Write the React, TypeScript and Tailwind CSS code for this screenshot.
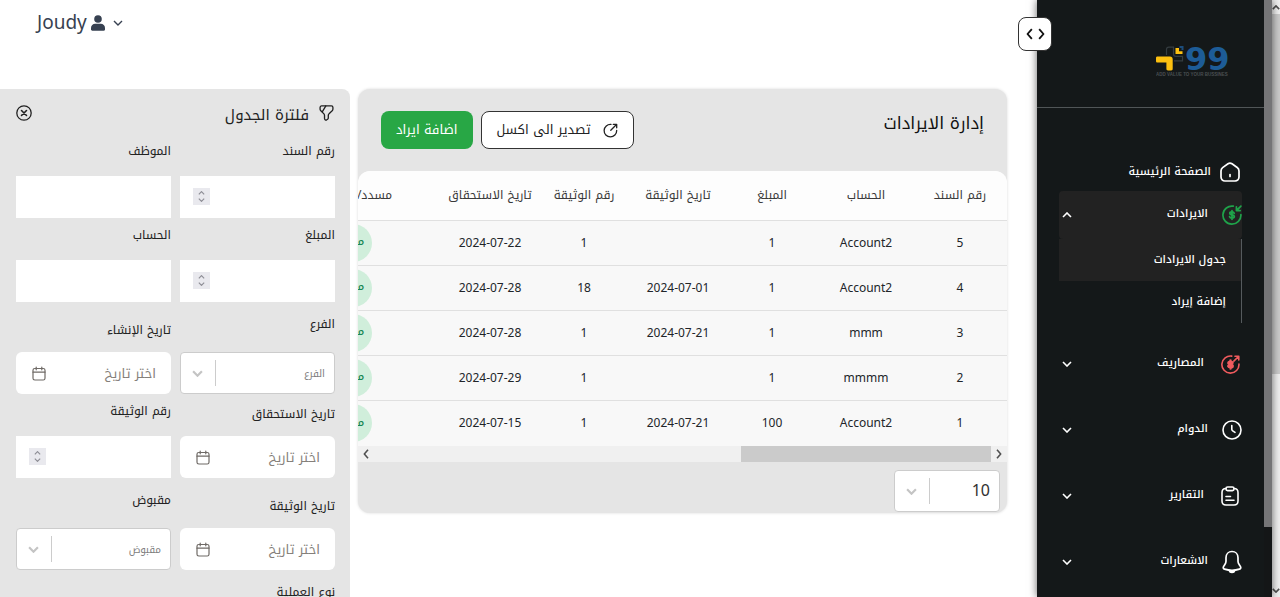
import type { ReactNode } from 'react';

type IconProps = { className?: string };

const line = {
  fill: 'none',
  stroke: 'currentColor',
  strokeLinecap: 'round' as const,
  strokeLinejoin: 'round' as const,
};

function HomeIcon({ className }: IconProps) {
  return (
    <svg viewBox="0 0 20 20" className={className} {...line} strokeWidth="1.7">
      <path d="M8 1.7 2.6 5.6C1.6 6.4 1 7.6 1 8.9v6.2A3.9 3.9 0 0 0 4.9 19h10.2a3.9 3.9 0 0 0 3.9-3.9V8.9c0-1.4-.7-2.6-1.8-3.4L12 1.8a3.6 3.6 0 0 0-4-.1Z" />
      <path d="M10 12.5v2" />
    </svg>
  );
}

function CoinIcon({ className, incoming }: IconProps & { incoming: boolean }) {
  return (
    <svg viewBox="0 0 20 20" className={className} {...line} strokeWidth="1.7">
      <path d="M11.3 1.2A9 9 0 1 0 18.9 9.6" />
      <path d={incoming ? 'M18.9 1.1 14.4 5.6M14.4 1.8V5.6h3.8' : 'M13.5 6.5 18.7 1.3M14.7 1.3h4v4'} />
      <path
        d="M12.2 8.2c-.3-.8-1.1-1.2-2.2-1.2-1.3 0-2.2.5-2.2 1.5 0 2.2 4.5.8 4.5 3 0 1-1 1.5-2.3 1.5-1.2 0-2.1-.4-2.4-1.3M10 5.7v8.6"
        strokeWidth={incoming ? 1.8 : 2.6}
      />
    </svg>
  );
}

function ClockIcon({ className }: IconProps) {
  return (
    <svg viewBox="0 0 20 20" className={className} {...line} strokeWidth="1.6">
      <circle cx="10" cy="10" r="9" />
      <path d="M9.8 5.5v3.7c0 .7.3 1.2.9 1.6l2.3 1.5" />
    </svg>
  );
}

function ClipboardIcon({ className }: IconProps) {
  return (
    <svg viewBox="0 0 20 20" className={className} {...line} strokeWidth="1.6">
      <path d="M6 2.5c-2.5.1-4 1.3-4 4V15c0 2.7 1.4 4 4 4h8c2.6 0 4-1.3 4-4V6.5c0-2.7-1.5-3.9-4-4" />
      <rect x="6" y="1" width="8" height="3.6" rx="1.6" />
      <path d="M6 10.5h4.5M6 14.3h8" />
    </svg>
  );
}

function BellIcon({ className }: IconProps) {
  return (
    <svg viewBox="0 0 20 24" className={className} {...line} strokeWidth="1.7">
      <path d="M10 1.5c-3.5 0-6 2.6-6 6.2v3.5c0 1.2-.5 2.3-1.3 3.5l-1.2 1.9c-.6 1.1-.2 2.2 1 2.5 4.9 1.5 10.1 1.5 15 0 1.2-.3 1.6-1.4 1-2.5l-1.2-1.9C16.5 13.5 16 12.4 16 11.2V7.7c0-3.6-2.5-6.2-6-6.2Z" />
      <path d="M7.2 20.5c.4 1.3 1.5 2 2.8 2s2.4-.7 2.8-2" fill="currentColor" />
    </svg>
  );
}

function Chevron({ className, up, weight = 2 }: IconProps & { up?: boolean; weight?: number }) {
  return (
    <svg viewBox="0 0 10 6" className={className} {...line} strokeWidth={weight} strokeLinecap="butt" strokeLinejoin="miter">
      <path d={up ? 'M1 5l4-4 4 4' : 'M1 1l4 4 4-4'} />
    </svg>
  );
}

function SideArrow({ className, left }: IconProps & { left?: boolean }) {
  return (
    <svg viewBox="0 0 6 10" className={className} {...line} strokeWidth="1.6" strokeLinecap="butt">
      <path d={left ? 'M5 .8 1.3 5 5 9.2' : 'M1 .8 4.7 5 1 9.2'} />
    </svg>
  );
}

function FunnelIcon({ className }: IconProps) {
  return (
    <svg viewBox="0 0 16 18" className={className} {...line} strokeWidth="1.4">
      <path d="M2.8 1h10.4c.9 0 1.6.7 1.6 1.6v1.7c0 .6-.4 1.4-.8 1.8l-3.3 3.1c-.5.4-.8 1.2-.8 1.8v2.7c0 .5-.3 1.1-.7 1.3l-1 .7c-1 .6-2.3-.1-2.3-1.3V11c0-.5-.3-1.2-.6-1.6L2 6.100c-.4-.4-.8-1.2-.8-1.7V2.7C1.2 1.7 1.9 1 2.8 1Z" />
      <path d="M7.3 1 3.5 7.2" />
    </svg>
  );
}

function CloseIcon({ className }: IconProps) {
  return (
    <svg viewBox="0 0 16 16" className={className} {...line} strokeWidth="1.3">
      <circle cx="8" cy="8" r="7.2" />
      <path d="m5.5 5.5 5 5M10.5 5.5l-5 5" strokeWidth="1.6" />
    </svg>
  );
}

function ExportIcon({ className }: IconProps) {
  return (
    <svg viewBox="0 0 16 16" className={className} {...line} strokeWidth="1.4">
      <path d="M8.5 1.5A6.7 6.7 0 1 0 14.6 8" />
      <path d="M8.3 7.7 14.4 1.6M10.900 1.4h3.7v3.7" />
    </svg>
  );
}

function CalendarIcon({ className }: IconProps) {
  return (
    <svg viewBox="0 0 14 15" className={className} {...line} strokeWidth="1.2">
      <rect x="1" y="2.5" width="12" height="11.5" rx="1.8" />
      <path d="M1 6.2h12M4.2 1v2.8M9.8 1v2.8" />
    </svg>
  );
}

function PersonIcon({ className }: IconProps) {
  return (
    <svg viewBox="0 0 14 16" className={className} fill="currentColor">
      <circle cx="7" cy="4" r="3.8" />
      <path d="M4.2 8.8h5.6A4.2 4.2 0 0 1 14 13v1.5c0 .8-.6 1.2-1.3 1.2H1.3C.6 15.7 0 15.3 0 14.5V13a4.2 4.2 0 0 1 4.2-4.2Z" />
    </svg>
  );
}

function Logo() {
  return (
    <svg viewBox="0 0 76 32" direction="ltr" className="h-8 w-[76px] font-bold" role="img" aria-label="99">
      <path
        d="M10.500 10V4.500C10.500 3 11.300 2.200 12.800 2.200H17.500V9c0 1.600.8 2.300 2.300 2.300h6.700v4.500h-8.500"
        fill="none"
        stroke="#343c40"
        strokeWidth="1.2"
      />
      <path d="M1.5 11.5H14c1.7 0 2.700 1 2.700 2.700v9.600c0 1-.5 1.600-1.500 1.600H12c-1 0-1.600-.6-1.600-1.600v-6.300H1.500c-1 0-1.500-.5-1.500-1.500V13c0-1 .5-1.500 1.500-1.500Z" fill="#fdc010" />
      <path d="M19.500 3H23v3.300h3.500V9h-7Z" fill="#fdc010" />
      <path d="M23.500 1h4v4h-2v-2h-2Z" fill="#1c4d7c" />
      <text x="29" y="25" fontSize="32" fill="#1d5c97" className="font-['DejaVu_Sans',sans-serif]">
        99
      </text>
      <text x="0" y="31" fontSize="4.5" fill="#4a4f52" className="font-['Liberation_Sans',sans-serif]">
        ADD VALUE TO YOUR BUSSINES
      </text>
    </svg>
  );
}

function NavItem({ label, icon, wide, open }: { label: string; icon: ReactNode; wide?: boolean; open?: boolean }) {
  return (
    <button type="button" aria-expanded={!!open} className="flex h-12 w-full items-center gap-[14px]">
      <span className={wide ? 'flex w-6 justify-center' : 'flex w-5 justify-center'}>{icon}</span>
      <span className="pb-[2px]">{label}</span>
      <Chevron up={open} weight={1.6} className="ms-auto me-[3px] h-[6px] w-[10px]" />
    </button>
  );
}

function Sidebar() {
  return (
    <aside className="relative z-10 flex w-[235px] shrink-0 bg-[#141819] text-white shadow-[0_0_8px_rgba(0,0,0,0.6)]">
      <div className="w-2 shrink-0 bg-[#141617]">
        <div className="h-[527px] bg-[#757577]" />
      </div>
      <nav className="min-w-0 flex-1 overflow-hidden text-[11px] font-medium">
        <div className="flex h-[108px] items-end border-b border-[#505557] pb-[30px] ps-8">
          <Logo />
        </div>
        <div className="px-[22px] pt-[45px]">
          <a href="#home" className="flex h-[38px] items-center gap-[9px]">
            <HomeIcon className="ms-[2px] h-5 w-5" />
            <span>الصفحة الرئيسية</span>
          </a>
          <div className="rounded-sm bg-[#222]">
            <NavItem label="الايرادات" open icon={<CoinIcon incoming className="h-5 w-5 text-[#1fa34a]" />} />
          </div>
          <div className="border-s border-[#555a5d]">
            <a href="#revenues" className="flex h-[42px] items-center bg-[#222] ps-[15px]">
              جدول الايرادات
            </a>
            <a href="#add-revenue" className="flex h-[42px] items-center ps-[15px]">
              إضافة إيراد
            </a>
          </div>
          <div className="mt-[17px] flex flex-col gap-[18px]">
            <NavItem label="المصاريف" wide icon={<CoinIcon incoming={false} className="h-[19px] w-[19px] text-[#ef5b5e]" />} />
            <NavItem label="الدوام" icon={<ClockIcon className="h-5 w-5" />} />
            <NavItem label="التقارير" wide icon={<ClipboardIcon className="h-5 w-5" />} />
            <NavItem label="الاشعارات" icon={<BellIcon className="h-6 w-5" />} />
          </div>
        </div>
      </nav>
    </aside>
  );
}

type FieldKind = 'text' | 'number' | 'select' | 'date';

const fields: { id: string; label: string; kind: FieldKind }[] = [
  { id: 'bond', label: 'رقم السند', kind: 'number' },
  { id: 'employee', label: 'الموظف', kind: 'text' },
  { id: 'amount', label: 'المبلغ', kind: 'number' },
  { id: 'account', label: 'الحساب', kind: 'text' },
  { id: 'branch', label: 'الفرع', kind: 'select' },
  { id: 'created', label: 'تاريخ الإنشاء', kind: 'date' },
  { id: 'due', label: 'تاريخ الاستحقاق', kind: 'date' },
  { id: 'docno', label: 'رقم الوثيقة', kind: 'number' },
  { id: 'docdate', label: 'تاريخ الوثيقة', kind: 'date' },
  { id: 'received', label: 'مقبوض', kind: 'select' },
  { id: 'operation', label: 'نوع العملية', kind: 'select' },
];

function SelectBox({ id, value, small }: { id: string; value: string; small?: boolean }) {
  return (
    <div className="relative">
      <select
        id={id}
        aria-label={value}
        className={
          small
            ? 'h-[42px] w-full appearance-none rounded border border-[#ccc] bg-white ps-[9px] text-[10px] text-[#808080]'
            : 'h-[42px] w-full appearance-none rounded border border-[#ccc] bg-white ps-[9px] text-base text-[#333]'
        }
      >
        <option>{value}</option>
      </select>
      <span className="pointer-events-none absolute inset-y-2 left-0 flex w-9 items-center justify-center border-r border-[#ccc] text-[#c4c4c4]">
        <Chevron className="h-[7px] w-[11px]" />
      </span>
    </div>
  );
}

function Field({ id, label, kind }: { id: string; label: string; kind: FieldKind }) {
  const labelClass =
    kind === 'select' ? 'mt-[5px] mb-4' : kind === 'date' ? 'mb-[10px]' : 'mb-[13px]';
  return (
    <div className="flex min-w-0 flex-col justify-end">
      <label htmlFor={id} className={`text-xs leading-6 text-[#222] ${labelClass}`}>
        {label}
      </label>
      {kind === 'text' && <input id={id} type="text" className="h-[42px] w-full bg-white px-3" />}
      {kind === 'number' && (
        <div className="relative">
          <input id={id} type="text" inputMode="numeric" className="h-[42px] w-full bg-white px-3" />
          <span className="pointer-events-none absolute left-[13px] top-3 flex h-[17px] w-[17px] flex-col items-center justify-center gap-[3px] bg-[#e9e9ee] text-[#8e8e96]">
            <Chevron up weight={1.8} className="h-1 w-[7px]" />
            <Chevron weight={1.8} className="h-1 w-[7px]" />
          </span>
        </div>
      )}
      {kind === 'date' && (
        <div className="relative">
          <input
            id={id}
            type="text"
            placeholder="اختر تاريخ"
            className="h-[42px] w-full rounded-md bg-white pe-10 ps-[15px] text-[13px] placeholder:text-[#857f7a]"
          />
          <CalendarIcon className="pointer-events-none absolute left-4 top-[14px] h-[15px] w-[14px] text-[#6f6a66]" />
        </div>
      )}
      {kind === 'select' && <SelectBox id={id} value={label} small />}
    </div>
  );
}

function FilterPanel() {
  return (
    <section className="w-[350px] shrink-0 overflow-hidden rounded-tr-lg bg-[#e5e5e5] pl-4 pr-[15px]">
      <div className="flex h-[50px] items-center justify-between pb-[2px]">
        <h2 className="flex items-center gap-[9px] text-[15px] text-[#222]">
          <FunnelIcon className="h-[17px] w-[17px]" />
          <span className="pt-1">فلترة الجدول</span>
        </h2>
        <button type="button" aria-label="إغلاق" className="text-[#222]">
          <CloseIcon className="h-4 w-4" />
        </button>
      </div>
      <form className="grid grid-cols-2 gap-x-[9px] gap-y-[5px]">
        {fields.map((f) => (
          <Field key={f.id} {...f} />
        ))}
      </form>
    </section>
  );
}

const headers = ['رقم السند', 'الحساب', 'المبلغ', 'تاريخ الوثيقة', 'رقم الوثيقة', 'تاريخ الاستحقاق', 'مسدد/غير مسدد'];

const rows = [
  ['5', 'Account2', '1', '', '1', '2024-07-22'],
  ['4', 'Account2', '1', '2024-07-01', '18', '2024-07-28'],
  ['3', 'mmm', '1', '2024-07-21', '1', '2024-07-28'],
  ['2', 'mmmm', '1', '', '1', '2024-07-29'],
  ['1', 'Account2', '100', '2024-07-21', '1', '2024-07-15'],
];

function RevenueCard() {
  return (
    <section className="min-w-0 flex-1 overflow-hidden rounded-xl bg-[#e5e5e5] shadow-[0_0_3px_rgba(0,0,0,0.15)]">
      <div className="flex h-[82px] items-center justify-between px-[23px]">
        <h1 className="pb-3 text-[17px] text-[#111]">إدارة الايرادات</h1>
        <div className="flex gap-2">
          <button
            type="button"
            className="flex h-[38px] items-center gap-3 rounded-lg border border-[#333] bg-white px-[15px] text-[13px] text-[#222]"
          >
            <ExportIcon className="h-[15px] w-[15px]" />
            <span>تصدير الى اكسل</span>
          </button>
          <button type="button" className="h-[38px] rounded-lg bg-[#28a745] px-[15px] text-[13px] text-white">
            اضافة ايراد
          </button>
        </div>
      </div>
      <div className="overflow-hidden rounded-t-xl bg-[#f8f8f8]">
        <table className="w-[751px] table-fixed border-collapse text-center">
          <colgroup>
            {headers.map((h, i) => (
              <col key={h} className={i < 6 ? 'w-[94px]' : 'w-[187px]'} />
            ))}
          </colgroup>
          <thead>
            <tr className="h-[49px] border-b border-[#e0e0e0] bg-[#fdfdfd] text-xs text-[#3a3a3a]">
              {headers.map((h) => (
                <th key={h} className="whitespace-nowrap p-0 font-normal">
                  {h}
                </th>
              ))}
            </tr>
          </thead>
          <tbody className="text-xs text-[#212529]">
            {rows.map((r) => (
              <tr key={r[0]} className="h-[45px] border-b border-[#e0e0e0] last:h-[46px] last:border-0">
                {r.map((c, i) => (
                  <td key={headers[i]} className="p-0">
                    {c}
                  </td>
                ))}
                <td className="p-0">
                  <span className="inline-flex h-[38px] items-center rounded-full bg-[#d0eedb] px-2 align-middle text-[11px] font-medium text-[#198754]">
                    مسدد
                  </span>
                </td>
              </tr>
            ))}
          </tbody>
        </table>
      </div>
      <div className="flex h-4 items-center bg-[#f0f0f0] text-[#505050]">
        <SideArrow className="mx-[5px] h-[10px] w-[6px]" />
        <div className="h-full w-[250px] bg-[#cbcbcb]" />
        <SideArrow left className="me-[5px] ms-auto h-[10px] w-[6px]" />
      </div>
      <div className="flex h-[51px] items-center px-[7px] pt-[7px]">
        <div className="w-[106px]">
          <SelectBox id="page-size" value="10" />
        </div>
      </div>
    </section>
  );
}

export default function App() {
  return (
    <div
      dir="rtl"
      className="flex h-screen overflow-hidden bg-white font-['Noto_Kufi_Arabic','Noto_Sans',sans-serif]"
    >
      <div className="flex w-2 shrink-0 flex-col bg-[#f0f0f0]">
        <div className="flex h-[14px] items-center justify-center text-[#505050]">
          <Chevron up className="h-[5px] w-2" />
        </div>
        <div className="h-[360px] bg-[#cbcbcb]" />
        <div className="mt-auto flex h-[14px] items-center justify-center text-[#505050]">
          <Chevron className="h-[5px] w-2" />
        </div>
      </div>
      <Sidebar />
      <main className="relative z-20 flex min-w-0 flex-1 flex-col">
        <button
          type="button"
          aria-label="القائمة"
          className="absolute -right-[15px] top-[17px] flex h-[34px] w-[34px] items-center justify-center gap-[5px] rounded-lg border border-[#333] bg-white text-[#111]"
        >
          <SideArrow className="h-3 w-[7px]" />
          <SideArrow left className="h-3 w-[7px]" />
        </button>
        <header className="flex h-[89px] shrink-0 items-start justify-end pe-[37px]">
          <button type="button" dir="ltr" className="mt-[9px] flex items-center gap-1 text-[19px] text-[#374151]">
            <span>Joudy</span>
            <PersonIcon className="h-4 w-[14px]" />
            <Chevron weight={1.4} className="ml-1 h-[6px] w-[10px]" />
          </button>
        </header>
        <div className="flex min-h-0 flex-1 items-start gap-2 ps-[30px]">
          <RevenueCard />
          <div className="flex self-stretch">
            <FilterPanel />
          </div>
        </div>
      </main>
    </div>
  );
}
